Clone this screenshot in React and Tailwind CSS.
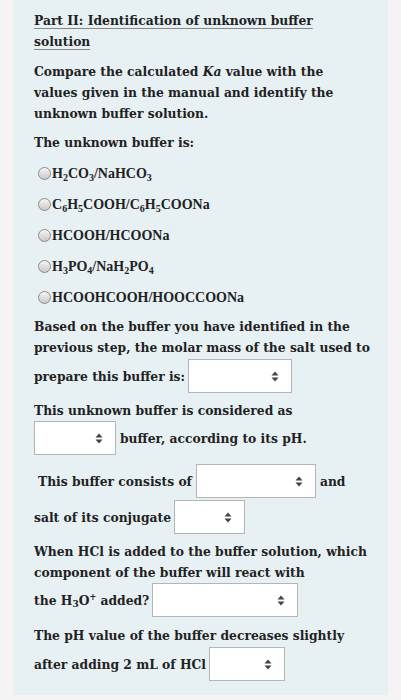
import { useState } from "react";

const options = [
  ["H", <sub key="a">2</sub>, "CO", <sub key="b">3</sub>, "/NaHCO", <sub key="c">3</sub>],
  ["C", <sub key="a">6</sub>, "H", <sub key="b">5</sub>, "COOH/C", <sub key="c">6</sub>, "H", <sub key="d">5</sub>, "COONa"],
  ["HCOOH/HCOONa"],
  ["H", <sub key="a">3</sub>, "PO", <sub key="b">4</sub>, "/NaH", <sub key="c">2</sub>, "PO", <sub key="d">4</sub>],
  ["HCOOHCOOH/HOOCCOONa"],
];

function Select({ w }) {
  return (
    <span
      className={`inline-flex h-[34px] shrink-0 items-center justify-end border border-[#b5b5b5] bg-white pr-[12px] align-middle ${w}`}
    >
      <svg width="8" height="11" viewBox="0 0 8 11">
        <path d="M4 0.5L7.5 4.5H0.5Z" fill="#444" />
        <path d="M4 10.5L7.5 6.5H0.5Z" fill="#444" />
      </svg>
    </span>
  );
}

export default function App() {
  const [picked, setPicked] = useState(null);

  return (
    <div className="min-h-[700px] bg-[#f5f3f3] px-[13px] font-['DejaVu_Serif_Condensed',serif] text-[13.7px] font-bold text-[#222]">
      <div className="min-h-[695px] whitespace-nowrap bg-[#e7f1f4] px-[21px] pt-[10px] leading-[21px]">
        <p className="underline decoration-[#888] underline-offset-[3px]">
          Part II: Identification of unknown buffer
          <br />
          solution
        </p>

        <p className="mt-[9px]">
          Compare the calculated <i>Ka</i> value with the
          <br />
          values given in the manual and identify the
          <br />
          unknown buffer solution.
        </p>

        <p className="mt-[8px]">The unknown buffer is:</p>

        <div className="mt-[10px] flex flex-col gap-[10px] font-['Liberation_Serif',serif] text-[14px]">
          {options.map((o, i) => (
            <label key={i} className="flex h-[21px] items-center">
              <input
                type="radio"
                name="buffer"
                checked={picked === i}
                onChange={() => setPicked(i)}
                className="ml-[4px] mr-[1px] h-[13px] w-[13px] appearance-none rounded-full border border-[#8a8a8a] bg-gradient-to-b from-[#f6f6f6] to-[#c9c9c9]"
              />
              <span className="[&_sub]:text-[10px]">{o}</span>
            </label>
          ))}
        </div>

        <p className="mt-[8px]">
          Based on the buffer you have identified in the
          <br />
          previous step, the molar mass of the salt used to
        </p>
        <p className="mt-[1px] flex items-center gap-[3px]">
          prepare this buffer is: <Select w="w-[104px]" />
        </p>

        <p className="mt-[7px]">This unknown buffer is considered as</p>
        <p className="mt-0 flex items-center gap-[4px]">
          <Select w="w-[82px]" /> buffer, according to its pH.
        </p>

        <p className="mt-[9px] flex items-center gap-[4px] pl-[4px]">
          This buffer consists of <Select w="w-[120px]" /> and
        </p>
        <p className="mt-[2px] flex items-center gap-[3px]">
          salt of its conjugate <Select w="w-[71px]" />
        </p>

        <p className="mt-[7px]">
          When HCl is added to the buffer solution, which
          <br />
          component of the buffer will react with
        </p>
        <p className="mt-0 flex items-center gap-[3px]">
          <span>
            the H<sub className="text-[10px]">3</sub>O<sup className="text-[9px]">+</sup> added?
          </span>
          <Select w="w-[146px]" />
        </p>

        <p className="mt-[8px]">The pH value of the buffer decreases slightly</p>
        <p className="mt-[1px] flex items-center gap-[3px]">
          after adding 2 mL of HCl <Select w="w-[76px]" />
        </p>
      </div>
    </div>
  );
}
